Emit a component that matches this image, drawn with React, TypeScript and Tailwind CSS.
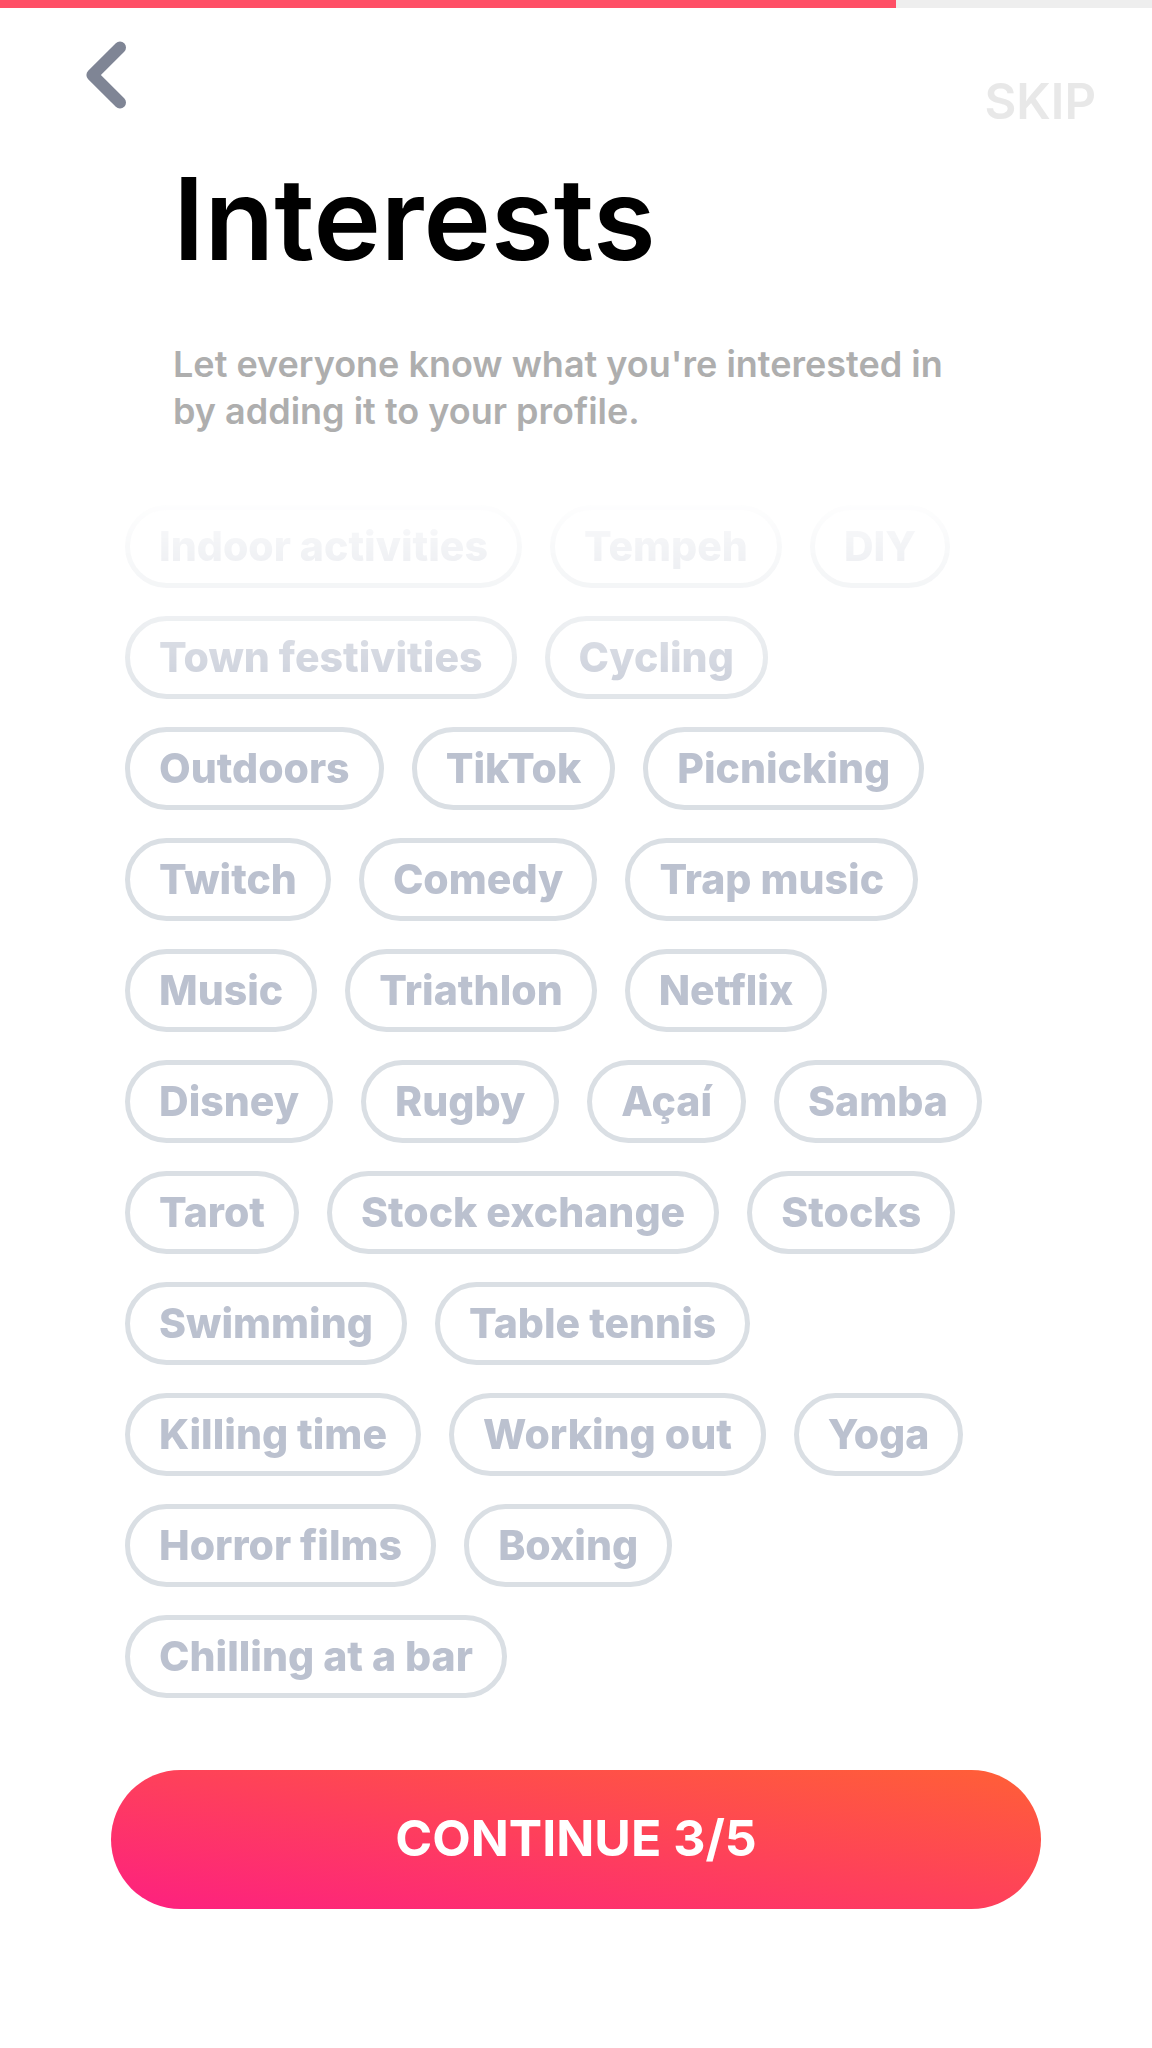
const interests = [
  "Indoor activities", "Tempeh", "DIY",
  "Town festivities", "Cycling",
  "Outdoors", "TikTok", "Picnicking",
  "Twitch", "Comedy", "Trap music",
  "Music", "Triathlon", "Netflix",
  "Disney", "Rugby", "Açaí", "Samba",
  "Tarot", "Stock exchange", "Stocks",
  "Swimming", "Table tennis",
  "Killing time", "Working out", "Yoga",
  "Horror films", "Boxing",
  "Chilling at a bar",
];

function ProgressBar() {
  return (
    <div
      role="progressbar"
      aria-label="Profile setup"
      aria-valuemin={0}
      aria-valuemax={9}
      aria-valuenow={7}
      className="h-2 w-full bg-[#eeeeee]"
    >
      <div className="h-full w-7/9 bg-[#ff4f66]" />
    </div>
  );
}

function Header() {
  return (
    <header className="flex items-start justify-between pl-[86px] pr-14">
      <button type="button" aria-label="Back" className="mt-[33px] cursor-pointer text-[#7f8595]">
        <svg width="40" height="68" viewBox="0 0 40 68" fill="none" aria-hidden="true">
          <path
            d="M34 6.6 6.4 34 34 61.4"
            stroke="currentColor"
            strokeWidth="12"
            strokeLinecap="round"
            strokeLinejoin="round"
          />
        </svg>
      </button>
      <button
        type="button"
        className="mt-[70px] cursor-pointer text-[49px] leading-[48px] font-semibold text-[#e8e8e8]"
      >
        SKIP
      </button>
    </header>
  );
}

function InterestList() {
  return (
    <ul
      aria-label="Interests"
      className="mt-[70px] flex flex-wrap gap-x-7 gap-y-7 pl-[125px] pr-[131px] mask-[linear-gradient(to_bottom,rgba(0,0,0,0.04)_0px,rgba(0,0,0,0.18)_40px,rgba(0,0,0,0.3)_83px,rgba(0,0,0,0.45)_110px,rgba(0,0,0,0.62)_151px,rgba(0,0,0,0.8)_193px,#000_240px)]"
    >
      {interests.map((name) => (
        <li key={name}>
          <button
            type="button"
            className="flex h-[83px] cursor-pointer items-center rounded-full border-[5px] border-[#dadfe4] px-[29px] pb-0.5 text-[41px] leading-[48px] font-extrabold whitespace-nowrap text-[#bbc1cf]"
          >
            {name}
          </button>
        </li>
      ))}
    </ul>
  );
}

export default function App() {
  return (
    <div className="min-h-screen bg-white pb-16 font-[Inter,sans-serif]">
      <ProgressBar />
      <Header />
      <main>
        <div className="px-[173px]">
          <h1 className="mt-[37px] text-[114px] leading-[112px] font-semibold text-black">Interests</h1>
          <p className="mt-[66px] max-w-[800px] text-[36px] leading-[47px] font-semibold text-[#aeaeae]">
            Let everyone know what you're interested in by adding it to your profile.
          </p>
        </div>
        <InterestList />
        <div className="mt-[72px] px-[111px]">
          <button
            type="button"
            className="h-[139px] w-full cursor-pointer rounded-full bg-[linear-gradient(to_top_right,#fd2080,#ff6036)] pb-1 text-[50px] leading-[56px] font-bold text-white"
          >
            CONTINUE 3/5
          </button>
        </div>
      </main>
    </div>
  );
}
